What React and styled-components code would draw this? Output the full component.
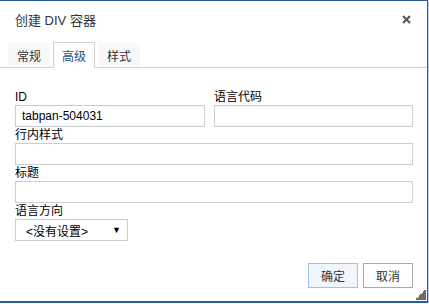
import styled, { createGlobalStyle } from "styled-components";

const GlobalStyle = createGlobalStyle`
  html, body {
    margin: 0;
    padding: 0;
    background: #ffffff;
  }
  body {
    font-family: "Liberation Sans", "Noto Sans CJK SC", sans-serif;
    font-size: 12px;
    color: #000;
  }
`;

const Dialog = styled.div`
  position: relative;
  box-sizing: border-box;
  margin-left: -1px;
  width: 429px;
  height: 303px;
  border: 1px solid #2a5aa6;
  border-bottom-width: 2px;
  box-shadow: 1px 1px 0 #b8cbe8;
  background: #fff;
  display: flex;
  flex-direction: column;
`;

const Header = styled.div`
  height: 41px;
  padding: 0 14px 4px 15px;
  box-sizing: border-box;
  display: flex;
  align-items: center;
  justify-content: space-between;
`;

const Title = styled.div`
  font-size: 13px;
  color: #333;
`;

const Close = styled.div`
  width: 9px;
  height: 9px;
  display: flex;
  margin-right: 2px;
`;

const TabBar = styled.div`
  display: flex;
  align-items: flex-end;
  gap: 3px;
  height: 26px;
  padding-left: 8px;
  box-sizing: border-box;
  border-bottom: 1px solid #d1d1d1;
`;

const Tab = styled.div`
  box-sizing: border-box;
  height: ${(p) => (p.$active ? "26px" : "24px")};
  margin-bottom: ${(p) => (p.$active ? "-1px" : "0")};
  padding: 0 8px;
  display: flex;
  align-items: center;
  font-size: 12px;
  color: ${(p) => (p.$active ? "#1f4f7f" : "#333")};
  background: ${(p) => (p.$active ? "#fff" : "#f8f8f8")};
  border: 1px solid ${(p) => (p.$active ? "#d1d1d1" : "transparent")};
  border-bottom: none;
`;

const Body = styled.div`
  flex: 1;
  padding: 21px 14px 13px 15px;
  display: flex;
  flex-direction: column;
`;

const Row = styled.div`
  display: grid;
  grid-template-columns: ${(p) => (p.$split ? "199px 1fr" : "1fr")};
`;

const Field = styled.div`
  display: flex;
  flex-direction: column;
  padding-right: ${(p) => p.$gap || "0"};
`;

const Label = styled.label`
  height: 16px;
  line-height: 16px;
  font-size: 12px;
  color: #000;
`;

const Input = styled.div`
  box-sizing: border-box;
  height: 22px;
  border: 1px solid #c8cdd2;
  padding: 0 6px;
  display: flex;
  align-items: center;
  font-size: 12px;
  color: #000;
`;

const Select = styled.div`
  box-sizing: border-box;
  width: 113px;
  height: 22px;
  border: 1px solid #c8cdd2;
  padding: 0 6px 0 10px;
  display: flex;
  align-items: center;
  justify-content: space-between;
  font-size: 12px;
  color: #000;
`;

const Arrow = styled.span`
  font-size: 9px;
  color: #000;
`;

const Footer = styled.div`
  margin-top: auto;
  display: flex;
  justify-content: flex-end;
  gap: 5px;
`;

const Button = styled.div`
  box-sizing: border-box;
  width: 50px;
  height: 25px;
  display: flex;
  align-items: center;
  justify-content: center;
  font-size: 12px;
  color: #333;
  background: ${(p) => (p.$primary ? "#f1f6fd" : "#fff")};
  border: 1px solid ${(p) => (p.$primary ? "#9cc1f0" : "#a8a8a8")};
`;

const Grip = styled.div`
  position: absolute;
  right: 1px;
  bottom: 1px;
  width: 11px;
  height: 11px;
  background: linear-gradient(135deg, transparent 50%, #6b6b6b 50%);
`;

export default function App() {
  return (
    <>
      <GlobalStyle />
      <Dialog>
        <Header>
          <Title>创建 DIV 容器</Title>
          <Close>
            <svg width="9" height="9" viewBox="0 0 9 9">
              <path d="M1 1 L8 8 M8 1 L1 8" stroke="#555" strokeWidth="2" />
            </svg>
          </Close>
        </Header>
        <TabBar>
          <Tab>常规</Tab>
          <Tab $active>高级</Tab>
          <Tab>样式</Tab>
        </TabBar>
        <Body>
          <Row $split>
            <Field $gap="9px">
              <Label>ID</Label>
              <Input>tabpan-504031</Input>
            </Field>
            <Field>
              <Label>语言代码</Label>
              <Input />
            </Field>
          </Row>
          <Row>
            <Field>
              <Label>行内样式</Label>
              <Input />
            </Field>
          </Row>
          <Row>
            <Field>
              <Label>标题</Label>
              <Input />
            </Field>
          </Row>
          <Row>
            <Field>
              <Label>语言方向</Label>
              <Select>
                <span>&lt;没有设置&gt;</span>
                <Arrow>▼</Arrow>
              </Select>
            </Field>
          </Row>
          <Footer>
            <Button $primary>确定</Button>
            <Button>取消</Button>
          </Footer>
        </Body>
        <Grip />
      </Dialog>
    </>
  );
}
